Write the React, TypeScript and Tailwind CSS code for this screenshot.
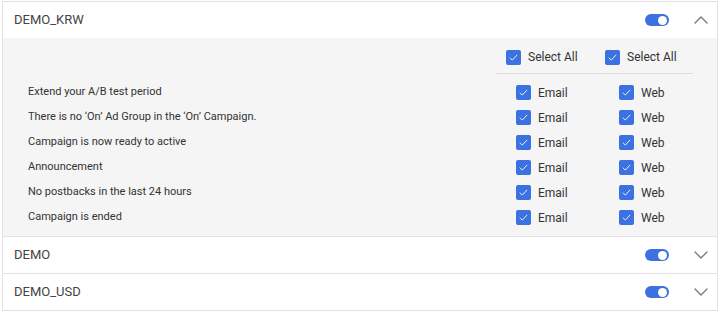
import { ChevronDown, ChevronUp } from "lucide-react";

const notices = [
  "Extend your A/B test period",
  "There is no ‘On’ Ad Group in the ‘On’ Campaign.",
  "Campaign is now ready to active",
  "Announcement",
  "No postbacks in the last 24 hours",
  "Campaign is ended",
];

function Check({ label }: { label: string }) {
  return (
    <div className="flex items-center gap-[7px]">
      <span className="flex h-[15px] w-[15px] items-center justify-center rounded-[2px] bg-[#3b71e0]">
        <svg viewBox="0 0 16 16" className="h-[13px] w-[13px]" fill="none">
          <path d="M3.5 8.2l3 3L12.5 4.8" stroke="white" strokeWidth="1.1" />
        </svg>
      </span>
      <span className="text-[12px] text-[#333]">{label}</span>
    </div>
  );
}

function Toggle() {
  return (
    <span className="flex h-[12px] w-[24px] items-center justify-end rounded-full bg-[#3b71e0] px-[2px]">
      <span className="h-[9px] w-[9px] rounded-full bg-white" />
    </span>
  );
}

function Header({ name, open }: { name: string; open?: boolean }) {
  return (
    <div className="flex h-[36px] items-center bg-white pl-[11px] pr-[4px]">
      <span className="flex-1 text-[13px] text-[#444]">{name}</span>
      <Toggle />
      <span className="ml-[20px] text-[#7a7a7a]">
        {open ? <ChevronUp size={24} strokeWidth={1.4} /> : <ChevronDown size={24} strokeWidth={1.4} />}
      </span>
    </div>
  );
}

export default function App() {
  return (
    <div className="px-[2px] pt-[1px] font-['Roboto',sans-serif]">
      <div className="border border-[#e2e2e2]">
        <Header name="DEMO_KRW" open />
        <div className="bg-[#f5f5f5] pb-[6px] pt-[7px]">
          <div className="flex justify-end pr-[24px]">
            <div className="w-[197px]">
              <div className="flex h-[24px] items-center pl-[10px]">
                <div className="w-[99px]">
                  <Check label="Select All" />
                </div>
                <Check label="Select All" />
              </div>
              <div className="mt-[4px] h-px bg-[#dcdcdc]" />
            </div>
          </div>
          <div className="mt-[6px]">
            {notices.map((n) => (
              <div key={n} className="flex h-[25px] items-center pr-[24px]">
                <span className="flex-1 pl-[25px] text-[11px] text-[#333]">{n}</span>
                <div className="flex w-[197px] pl-[20px]">
                  <div className="w-[103px]">
                    <Check label="Email" />
                  </div>
                  <Check label="Web" />
                </div>
              </div>
            ))}
          </div>
        </div>
        <div className="border-t border-[#e2e2e2]">
          <Header name="DEMO" />
        </div>
        <div className="border-t border-[#e2e2e2]">
          <Header name="DEMO_USD" />
        </div>
      </div>
    </div>
  );
}
